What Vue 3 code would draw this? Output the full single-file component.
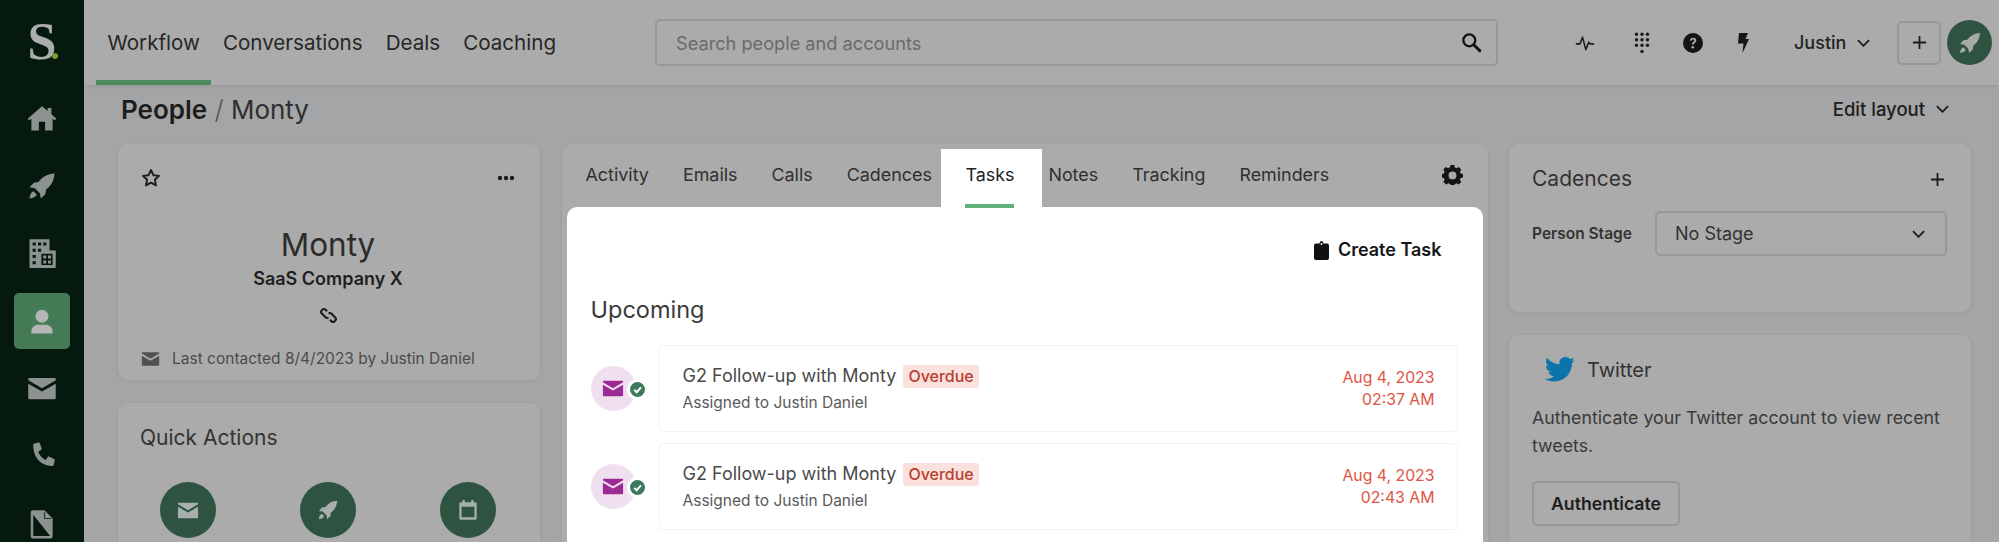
<template>
  <div class="app">
    <aside class="sidebar">
      <div class="logo">S<span class="logo-dot"></span></div>
      <nav class="side-nav">
        <a v-for="item in sideItems" :key="item.name" class="side-item" :class="{ active: item.active }">
          <svg class="side-icon" viewBox="0 0 24 24"><path :d="icons[item.name]" fill-rule="evenodd" /></svg>
        </a>
      </nav>
    </aside>

    <div class="main">
      <header class="topbar">
        <nav class="top-nav">
          <a v-for="(link, i) in topLinks" :key="link" class="top-link" :class="{ current: i === 0 }">{{ link }}</a>
        </nav>
        <div class="search">
          <span>Search people and accounts</span>
          <svg class="search-icon" viewBox="0 0 24 24"><circle cx="9.5" cy="9.5" r="6.8" fill="none" stroke="#111" stroke-width="2.6" /><path d="M14.5 14.5l7 7" stroke="#111" stroke-width="3.4" stroke-linecap="round" /></svg>
        </div>
        <div class="top-tools">
          <svg class="tool pulse" viewBox="0 0 24 24"><path d="M1 13h5l3-8 4 15 3.500-9 1.500 2h5" fill="none" stroke="#1c1c1c" stroke-width="1.900" stroke-linejoin="round" /></svg>
          <svg class="tool dial" viewBox="0 0 16 22">
            <circle v-for="d in dialDots" :key="d.k" :cx="d.x" :cy="d.y" r="1.700" fill="#1c1c1c" />
          </svg>
          <svg class="tool help" viewBox="0 0 20 20"><circle cx="10" cy="10" r="10" fill="#141414" /><path d="M6.800 7.600c.2-1.900 1.500-2.900 3.300-2.900 1.900 0 3.200 1.100 3.200 2.700 0 2.300-2.600 2.300-2.600 4.200H8.900c0-2.800 2.500-2.900 2.500-4.100 0-.6-.5-1.100-1.300-1.100-.9 0-1.400.5-1.500 1.300z" fill="#ababab" /><circle cx="9.800" cy="14.300" r="1.300" fill="#ababab" /></svg>
          <svg class="tool bolt" viewBox="0 0 12 20"><path d="M2 0h9L8.500 6H12L5.500 20l1-9.500H1z" fill="#141414" /></svg>
          <div class="user-menu">Justin <svg class="chev" viewBox="0 0 14 8"><path d="M1 1l6 6 6-6" /></svg></div>
          <button class="plus-btn"><svg viewBox="0 0 16 16"><path d="M8 1v14M1 8h14" /></svg></button>
          <div class="avatar"><svg viewBox="0 0 24 24"><path :d="icons.rocket" /></svg></div>
        </div>
      </header>

      <div class="page">
        <div class="page-head">
          <h1><b>People</b> <span class="sep">/</span> Monty</h1>
          <div class="edit-layout">Edit layout <svg class="chev" viewBox="0 0 14 8"><path d="M1 1l6 6 6-6" /></svg></div>
        </div>

        <div class="columns">
          <div class="col">
            <section class="card person">
              <div class="person-top">
                <svg class="star" viewBox="0 0 20 20"><path d="M10 2l2.400 5.200 5.600.7-4.100 3.900 1.100 5.600-5-2.800-5 2.800 1.100-5.600L2 7.900l5.600-.7z" fill="none" stroke="#1c1c1c" stroke-width="1.900" stroke-linejoin="round" /></svg>
                <svg class="dots" viewBox="0 0 18 6"><circle cx="3" cy="3" r="2.200" /><circle cx="9" cy="3" r="2.200" /><circle cx="15" cy="3" r="2.200" /></svg>
              </div>
              <div class="person-name">Monty</div>
              <div class="person-company">SaaS Company X</div>
              <svg class="link-icon" viewBox="0 0 20 20"><path d="M8.500 5.500L7 4a2.500 2.500 0 0 0-3.500 0L3 4.500A2.500 2.500 0 0 0 3 8l3.800 3.800a2.500 2.500 0 0 0 3.200.3M11.500 14.500L13 16a2.500 2.500 0 0 0 3.500 0l.5-.5a2.500 2.500 0 0 0 0-3.500l-3.800-3.800a2.500 2.500 0 0 0-3.200-.3" fill="none" stroke="#1c1c1c" stroke-width="2.200" /></svg>
              <div class="last-contacted">
                <svg viewBox="0 0 24 24"><path :d="icons.mail" /></svg>
                <span>Last contacted 8/4/2023 by Justin Daniel</span>
              </div>
            </section>

            <section class="card quick">
              <h3>Quick Actions</h3>
              <div class="quick-row">
                <div class="quick-btn"><svg viewBox="0 0 24 24"><path :d="icons.mail" /></svg></div>
                <div class="quick-btn"><svg viewBox="0 0 24 24"><path :d="icons.rocket" /></svg></div>
                <div class="quick-btn"><svg viewBox="0 0 24 24"><path :d="icons.calendar" fill-rule="evenodd" /></svg></div>
              </div>
            </section>
          </div>

          <section class="card center">
            <div class="tabs">
              <a v-for="tab in tabs" :key="tab" class="tab" :class="{ selected: tab === 'Tasks' }">{{ tab }}</a>
              <svg class="gear" viewBox="0 0 24 24"><path :d="icons.gear" fill-rule="evenodd" /></svg>
            </div>
            <div class="panel">
              <div class="panel-actions">
                <div class="create-task">
                  <svg viewBox="0 0 15 19"><path d="M2 2.500h3.500C5.700 1 6.500 0 7.500 0s1.800 1 2 2.500H13a2 2 0 0 1 2 2V17a2 2 0 0 1-2 2H2a2 2 0 0 1-2-2V4.500a2 2 0 0 1 2-2z" fill="#111" /><circle cx="7.500" cy="3" r="1" fill="#fff" /></svg>
                  Create Task
                </div>
              </div>
              <h2>Upcoming</h2>
              <div v-for="task in tasks" :key="task.time" class="task">
                <div class="task-icon">
                  <div class="task-circle"><svg viewBox="0 0 24 24"><path :d="icons.mail" /></svg></div>
                  <div class="task-check"><svg viewBox="0 0 12 12"><path d="M3 6.300l2.200 2.200L9.200 4" /></svg></div>
                </div>
                <div class="task-row">
                  <div class="task-text">
                    <div class="task-title">G2 Follow-up with Monty <span class="badge">Overdue</span></div>
                    <div class="task-sub">Assigned to Justin Daniel</div>
                  </div>
                  <div class="task-date">Aug 4, 2023<br />{{ task.time }}</div>
                </div>
              </div>
            </div>
          </section>

          <div class="col">
            <section class="card cadences">
              <div class="cad-head">
                <h3>Cadences</h3>
                <svg viewBox="0 0 16 16"><path d="M8 1v14M1 8h14" /></svg>
              </div>
              <div class="stage">
                <label>Person Stage</label>
                <div class="select">No Stage <svg class="chev" viewBox="0 0 14 8"><path d="M1 1l6 6 6-6" /></svg></div>
              </div>
            </section>

            <section class="card twitter">
              <div class="tw-head">
                <svg viewBox="0 0 24 20"><path :d="icons.bird" /></svg>
                <span>Twitter</span>
              </div>
              <p>Authenticate your Twitter account to view recent tweets.</p>
              <button class="auth-btn">Authenticate</button>
            </section>
          </div>
        </div>
      </div>
    </div>
  </div>
</template>

<script setup>
const icons = {
  home: 'M12 2.500L.5 12.500l1.300 1.300L3.500 12.600V22h6v-7h5v7h6v-9.400l1.700 1.200 1.300-1.300L19.500 9V4h-3v2.400z',
  rocket: 'M22 2c-5.500.2-9.800 2.600-12.800 6.800L5.500 9.300 2 13l4.300.7 4 4 .7 4.300 3.700-3.500.5-3.700C19.400 11.800 21.800 7.500 22 2zM5.200 16.200c-1.700.6-2.700 2.500-3.200 5.800 3.300-.5 5.200-1.500 5.800-3.200z',
  building: 'M2 1h16v9h5v14H2zM4.500 3.500v2.500h2.500V3.500zM8.800 3.500v2.500h2.500V3.500zM13 3.500v2.500h2.500V3.500zM4.500 8.500V11H7V8.500zM8.800 8.500V11h2.500V8.500zM4.500 13.500V16H7v-2.500zM4.500 18.500V21H7v-2.500zM11.500 12.500v9h9v-9zM13 14h2.400v2.400H13zM16.800 14h2.400v2.400h-2.400zM13 18h2.400v2.400H13zM16.800 18h2.400v2.400h-2.400z',
  user: 'M12 3a5.200 5.200 0 1 1 0 10.400A5.200 5.200 0 0 1 12 3zM3.500 22v-1.500c0-3.500 2.700-5.500 5.500-5.500h6c2.800 0 5.500 2 5.500 5.500V22z',
  mail: 'M2 4h20a1 1 0 0 1 1 1v.8l-11 6.400L1 5.800V5a1 1 0 0 1 1-1zM1 8.500l11 6.300 11-6.300V20a1 1 0 0 1-1 1H2a1 1 0 0 1-1-1z',
  phone: 'M6 2l3-.8c.6-.1 1.100.2 1.300.7l1.400 3.800c.2.500 0 1-.4 1.300L9 8.500c.9 2.700 3 5.100 6 6.600l1.600-2.300c.3-.4.800-.5 1.300-.3l3.700 1.800c.5.200.7.700.6 1.200l-.8 3.500c-.1.500-.5.900-1 .9C11 20 4.800 13 5 3c0-.5.400-.9 1-1z',
  file: 'M4.500 1H14l6.500 6.500V22a1.500 1.500 0 0 1-1.500 1.500H4.500A1.500 1.500 0 0 1 3 22V2.500A1.500 1.500 0 0 1 4.500 1zM5 4.500V21.500H18.500zM13.800 2.500v5.500h5.500v-.7h-4.800V2.500z',
  calendar: 'M6 1h2.500v2.500h7V1H18v2.500h2a1.500 1.500 0 0 1 1.500 1.500v16a1.500 1.500 0 0 1-1.500 1.500H4A1.500 1.500 0 0 1 2.500 21V5A1.500 1.500 0 0 1 4 3.500h2zM5 8.500V20h14V8.500z',
  gear: 'M10 1h4l.6 3c.7.200 1.300.5 1.900.9l2.700-1.400 2.800 2.800-1.500 2.700c.4.600.6 1.200.8 1.900l3 .6v4l-3 .6c-.2.700-.4 1.300-.8 1.900l1.500 2.700-2.800 2.800-2.700-1.500c-.6.400-1.200.7-1.900.9l-.6 3h-4l-.6-3c-.7-.2-1.300-.5-1.900-.9l-2.700 1.500L1.500 20.700 3 18c-.4-.6-.6-1.200-.8-1.900l-3-.6v-4l3-.6c.2-.7.4-1.300.8-1.900L1.500 6.300l2.800-2.800L7 4.900c.6-.4 1.200-.7 1.900-.9zM12 8.500a4.500 4.500 0 1 0 0 9 4.500 4.500 0 0 0 0-9z',
  bird: 'M21.500 5c0 .2 0 .4 0 .6C21.500 12 16.600 19.500 7.500 19.500c-2.800 0-5.400-.8-7.500-2.200.4 0 .8.100 1.200.1 2.300 0 4.400-.8 6.100-2.100-2.200 0-4-1.500-4.600-3.400.7.100 1.400.1 2.200-.1C2.600 11.300.8 9.200.8 6.700c.7.400 1.400.6 2.200.6C1.600 6.400.8 4.800.8 3c0-.9.300-1.800.7-2.500 2.400 3 6.100 5 10.200 5.200-.8-3.300 1.700-5.700 4.800-5.700 1.400 0 2.700.6 3.600 1.600 1.100-.2 2.200-.6 3.100-1.200-.4 1.200-1.100 2.100-2.200 2.700 1-.1 1.900-.4 2.800-.8-.7 1-1.500 1.900-2.300 2.700z'
}

const sideItems = [
  { name: 'home' },
  { name: 'rocket' },
  { name: 'building' },
  { name: 'user', active: true },
  { name: 'mail' },
  { name: 'phone' },
  { name: 'file' }
]

const topLinks = ['Workflow', 'Conversations', 'Deals', 'Coaching']
const tabs = ['Activity', 'Emails', 'Calls', 'Cadences', 'Tasks', 'Notes', 'Tracking', 'Reminders']

const tasks = [{ time: '02:37 AM' }, { time: '02:43 AM' }]

const dialDots = [{ k: 'last', x: 8, y: 19.5 }]
for (let r = 0; r < 3; r++) {
  for (let c = 0; c < 3; c++) {
    dialDots.push({ k: r + '-' + c, x: 2.5 + c * 5.5, y: 2.2 + r * 5.500 })
  }
}
</script>

<style>
html,
body {
  margin: 0;
  background: #a3a5a7;
}
</style>

<style scoped>
.app {
  display: flex;
  height: 542px;
  overflow: hidden;
  font-family: "Inter", "Liberation Sans", sans-serif;
  color: #2a2a2a;
  background: #a3a5a7;
}

.sidebar {
  width: 84px;
  flex-shrink: 0;
  background: #06190f;
}

.logo {
  position: relative;
  height: 85px;
  padding-top: 17px;
  box-sizing: border-box;
  text-align: center;
  font-family: "Liberation Serif", serif;
  font-size: 52px;
  font-weight: 700;
  line-height: 50px;
  color: #a9aeac;
}

.logo-dot {
  position: absolute;
  left: 52px;
  top: 53px;
  width: 6px;
  height: 6px;
  border-radius: 50%;
  background: #7d9a2c;
}

.side-nav {
  display: flex;
  flex-direction: column;
  align-items: center;
  gap: 11.600px;
  padding-top: 5px;
}

.side-item {
  width: 56px;
  height: 56px;
  display: flex;
  align-items: center;
  justify-content: center;
  border-radius: 5px;
}

.side-item.active {
  background: #457a57;
}

.side-icon {
  width: 30px;
  height: 30px;
  fill: #8b928f;
}

.side-item.active .side-icon {
  fill: #b4b6b5;
}

.main {
  flex: 1;
  min-width: 0;
}

.topbar {
  height: 85px;
  box-sizing: border-box;
  display: flex;
  align-items: center;
  background: #ababab;
  box-shadow: 0 1px 4px rgba(0, 0, 0, 0.1);
  position: relative;
}

.top-nav {
  display: flex;
  height: 100%;
  width: 571px;
  padding-left: 12px;
  box-sizing: border-box;
  flex-shrink: 0;
}

.top-link {
  padding: 0 11.500px;
  line-height: 85px;
  font-size: 20.600px;
  color: #272727;
}

.top-link.current {
  box-shadow: inset 0 -5px 0 #4d8a5f;
}

.search {
  width: 843px;
  height: 47px;
  box-sizing: border-box;
  flex-shrink: 0;
  display: flex;
  align-items: center;
  justify-content: space-between;
  padding: 0 14px 0 19px;
  border: 2px solid #969899;
  border-radius: 5px;
  font-size: 18.200px;
  color: #6a6a6a;
}

.search-icon {
  width: 21px;
  height: 21px;
}

.top-tools {
  flex: 1;
  display: flex;
  align-items: center;
  position: relative;
  padding-left: 76px;
}

.tool {
  flex-shrink: 0;
}

.pulse {
  width: 22px;
  height: 20px;
  margin-right: 38px;
}

.dial {
  width: 16px;
  height: 22px;
  margin-right: 33px;
}

.help {
  width: 20px;
  height: 20px;
  margin-right: 34px;
}

.bolt {
  width: 12px;
  height: 20px;
  margin-right: 45px;
}

.user-menu {
  display: flex;
  align-items: center;
  gap: 11px;
  font-size: 18px;
  font-weight: 500;
  color: #232323;
  margin-right: 27px;
}

.chev {
  width: 13px;
  height: 8px;
  fill: none;
  stroke: #1c1c1c;
  stroke-width: 2;
}

.plus-btn {
  width: 44px;
  height: 44px;
  padding: 0;
  flex-shrink: 0;
  display: flex;
  align-items: center;
  justify-content: center;
  background: none;
  border: 2px solid #959799;
  border-radius: 5px;
  margin-right: 6px;
}

.plus-btn svg,
.cad-head svg {
  width: 15px;
  height: 15px;
  fill: none;
  stroke: #1c1c1c;
  stroke-width: 1.900;
}

.avatar {
  width: 45px;
  height: 45px;
  flex-shrink: 0;
  border-radius: 50%;
  background: #2e5441;
  display: flex;
  align-items: center;
  justify-content: center;
}

.avatar svg {
  width: 24px;
  height: 24px;
  fill: #a3aca8;
}

.page {
  padding: 0 28px 0 34px;
}

.page-head {
  height: 59px;
  display: flex;
  align-items: center;
  justify-content: space-between;
  padding: 0 22px 11px 3px;
  box-sizing: border-box;
}

h1 {
  margin: 0;
  font-size: 26px;
  font-weight: 400;
  color: #2f2f2f;
}

h1 b {
  font-weight: 600;
  color: #1d1d1d;
}

.sep {
  color: #555;
  font-weight: 300;
}

.edit-layout {
  display: flex;
  align-items: center;
  gap: 11px;
  font-size: 18.500px;
  font-weight: 500;
  color: #202020;
}

.columns {
  display: grid;
  grid-template-columns: 422px 926px 462px;
  gap: 22px;
  column-gap: 21.500px;
}

.col {
  display: flex;
  flex-direction: column;
  gap: 23px;
}

.card {
  background: #ababab;
  border-radius: 10px;
  box-shadow: 0 1px 4px rgba(0, 0, 0, 0.07);
}

.person {
  height: 236px;
  box-sizing: border-box;
  padding: 24px 25px 0 23px;
  display: flex;
  flex-direction: column;
  align-items: center;
}

.person-top {
  align-self: stretch;
  display: flex;
  justify-content: space-between;
  align-items: center;
}

.star {
  width: 20px;
  height: 20px;
}

.dots {
  width: 18px;
  height: 6px;
  fill: #1c1c1c;
}

.person-name {
  margin-top: 36px;
  font-size: 31.500px;
  line-height: 42px;
  color: #2c2c2c;
}

.person-company {
  margin-top: 1px;
  font-size: 18px;
  font-weight: 600;
  line-height: 24px;
  color: #1f1f1f;
}

.link-icon {
  margin-top: 15px;
  width: 19px;
  height: 19px;
}

.last-contacted {
  align-self: stretch;
  margin-top: 24px;
  display: flex;
  align-items: center;
  gap: 12px;
  font-size: 15.500px;
  color: #4b4b4b;
}

.last-contacted svg {
  width: 19px;
  height: 19px;
  fill: #515151;
}

.quick {
  height: 300px;
  padding: 21px 22px 0;
  box-sizing: border-box;
}

h3 {
  margin: 0;
  font-size: 21px;
  font-weight: 400;
  line-height: 28px;
  color: #333;
}

.quick-row {
  display: flex;
  margin: 30px 0 0 20px;
  gap: 84px;
}

.quick-btn {
  width: 56px;
  height: 56px;
  border-radius: 50%;
  background: #2e5441;
  display: flex;
  align-items: center;
  justify-content: center;
}

.quick-btn svg {
  width: 22px;
  height: 22px;
  fill: #a7b0ac;
}

.center {
  height: 420px;
  padding: 5px 5px 0;
  box-sizing: border-box;
}

.tabs {
  display: flex;
  align-items: stretch;
  height: 58px;
  padding-left: 2px;
  position: relative;
}

.tab {
  padding: 0 17px;
  line-height: 52px;
  font-size: 17.900px;
  color: #303030;
}

.tab.selected {
  padding: 0 28px 0 24px;
  margin: 0 -11px 0 -7.500px;
  background: #fff;
  color: #222;
  position: relative;
}

.tab.selected::after {
  content: "";
  position: absolute;
  left: 24px;
  right: 28px;
  bottom: -1px;
  height: 4px;
  background: #5fb27b;
  z-index: 1;
}

.gear {
  margin-left: auto;
  margin-right: 20px;
  margin-top: 15px;
  width: 21px;
  height: 21px;
  fill: #141414;
}

.panel {
  background: #fff;
  border-radius: 10px 10px 0 0;
  height: 340px;
  padding: 0 25px 0 24px;
  box-sizing: border-box;
  position: relative;
}

.panel-actions {
  display: flex;
  justify-content: flex-end;
  padding: 33px 16px 0 0;
}

.create-task {
  display: flex;
  align-items: center;
  gap: 9px;
  font-size: 18px;
  font-weight: 600;
  line-height: 20px;
  color: #161616;
}

.create-task svg {
  width: 15px;
  height: 19px;
}

h2 {
  margin: 35px 0 0;
  font-size: 23.500px;
  font-weight: 400;
  line-height: 30px;
  color: #3a3a3a;
}

.task {
  display: flex;
  align-items: center;
  margin-top: 11px;
}

h2 + .task {
  margin-top: 20px;
}

.task-icon {
  width: 68px;
  height: 46px;
  flex-shrink: 0;
  position: relative;
}

.task-circle {
  width: 45px;
  height: 45px;
  border-radius: 50%;
  background: #f0dfee;
  display: flex;
  align-items: center;
  justify-content: center;
}

.task-circle svg {
  width: 22px;
  height: 22px;
  fill: #9c2a94;
}

.task-check {
  position: absolute;
  left: 36px;
  top: 13px;
  width: 15px;
  height: 15px;
  border: 3px solid #fff;
  border-radius: 50%;
  background: #3d7a5c;
  display: flex;
  align-items: center;
  justify-content: center;
}

.task-check svg {
  width: 13px;
  height: 13px;
  fill: none;
  stroke: #fff;
  stroke-width: 1.800;
}

.task-row {
  flex: 1;
  height: 87px;
  box-sizing: border-box;
  display: flex;
  align-items: center;
  justify-content: space-between;
  padding: 0 22px 0 23px;
  border: 1px solid #f3f3f3;
  border-radius: 4px;
}

.task-text {
  padding-top: 2px;
}

.task-title {
  font-size: 18px;
  line-height: 24px;
  color: #4a4a4a;
}

.badge {
  display: inline-block;
  padding: 0 5px;
  margin-left: 2px;
  background: #fbe1de;
  border-radius: 3px;
  font-size: 16px;
  font-weight: 500;
  line-height: 23px;
  color: #b8402f;
}

.task-sub {
  margin-top: 3px;
  font-size: 15.500px;
  line-height: 24px;
  color: #5a5a5a;
}

.task-date {
  text-align: right;
  font-size: 15.800px;
  line-height: 22px;
  color: #de5546;
}

.cadences {
  height: 168px;
  padding: 21px 26px 0 23px;
  box-sizing: border-box;
}

.cad-head {
  display: flex;
  justify-content: space-between;
  align-items: center;
}

.stage {
  display: flex;
  align-items: center;
  justify-content: space-between;
  margin-top: 18px;
  margin-right: -2px;
}

.stage label {
  font-size: 15.500px;
  font-weight: 600;
  color: #333;
}

.select {
  width: 292px;
  height: 45px;
  box-sizing: border-box;
  display: flex;
  align-items: center;
  justify-content: space-between;
  padding: 0 20px 0 18px;
  border: 2px solid #969899;
  border-radius: 5px;
  font-size: 18px;
  color: #333;
}

.twitter {
  height: 300px;
  padding: 22px 23px 0;
  box-sizing: border-box;
}

.tw-head {
  display: flex;
  align-items: center;
  gap: 12px;
  padding-left: 13px;
  font-size: 20px;
  color: #333;
}

.tw-head svg {
  width: 30px;
  height: 25px;
  fill: #0a74ab;
}

.twitter p {
  margin: 22px 0 0;
  font-size: 17.800px;
  line-height: 28px;
  color: #3a3a3a;
}

.auth-btn {
  margin-top: 21px;
  width: 148px;
  height: 45px;
  background: none;
  border: 2px solid #959799;
  border-radius: 5px;
  font-family: inherit;
  font-size: 17.700px;
  font-weight: 600;
  color: #1d1d1d;
}
</style>
